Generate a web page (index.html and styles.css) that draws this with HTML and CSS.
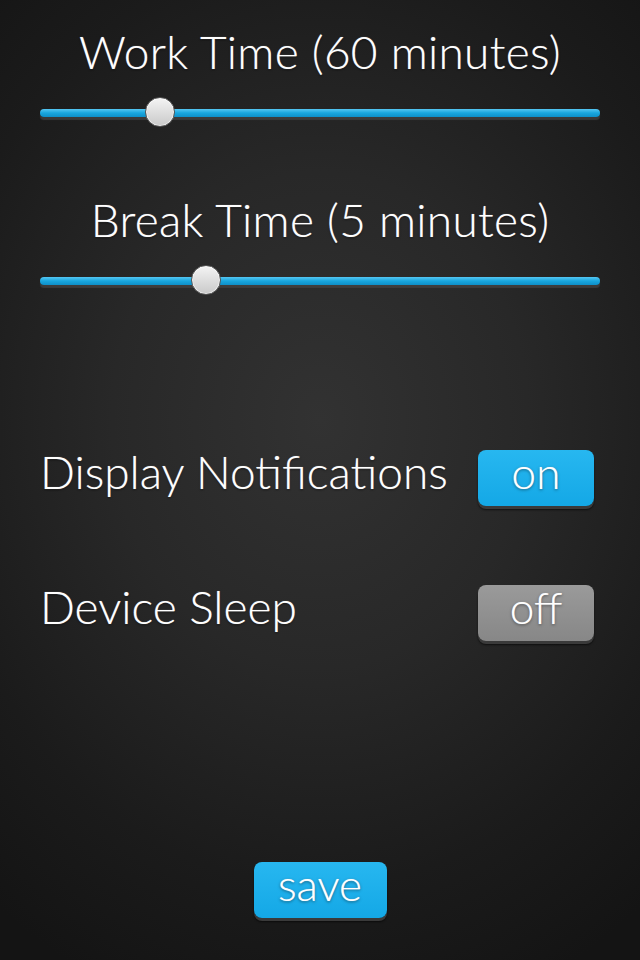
FILE: index.html
```html
<!DOCTYPE html>
<html>
<head>
<meta charset="utf-8">
<link rel="stylesheet" href="styles.css">
</head>
<body>
<div class="screen">
  <section class="slider-group">
    <h2 class="slider-title">Work Time (60 minutes)</h2>
    <div class="slider">
      <div class="track"></div>
      <div class="thumb" style="left: 105px"></div>
    </div>
  </section>
  <section class="slider-group second">
    <h2 class="slider-title">Break Time (5 minutes)</h2>
    <div class="slider">
      <div class="track"></div>
      <div class="thumb" style="left: 151px"></div>
    </div>
  </section>
  <div class="toggles">
    <div class="toggle-row">
      <span class="toggle-label">Display Notifications</span>
      <button class="btn btn-on">on</button>
    </div>
    <div class="toggle-row">
      <span class="toggle-label">Device Sleep</span>
      <button class="btn btn-off">off</button>
    </div>
  </div>
  <div class="footer">
    <button class="btn btn-save">save</button>
  </div>
</div>
</body>
</html>
```
FILE: styles.css
```css
html, body {
  margin: 0;
  padding: 0;
  width: 640px;
  height: 960px;
  overflow: hidden;
}
body {
  background: radial-gradient(ellipse 520px 620px at 320px 420px, #323232 0%, #282828 40%, #1b1b1b 75%, #141414 100%);
  font-family: Lato, "Open Sans", sans-serif;
  color: #fff;
}
.screen {
  height: 960px;
  display: flex;
  flex-direction: column;
  padding: 0 40px;
  box-sizing: border-box;
}
.slider-group {
  display: flex;
  flex-direction: column;
}
.slider-title {
  margin: 26px 0 0;
  font-weight: 300;
  font-size: 46px;
  line-height: 52px;
  text-align: center;
  letter-spacing: 0.3px;
  text-shadow: 0 0 1px rgba(255,255,255,0.5), 0 1px 2px rgba(0,0,0,0.6);
}
.second .slider-title {
  margin-top: 65px;
}
.slider {
  position: relative;
  height: 32px;
  margin-top: 19px;
}
.track {
  position: absolute;
  left: 0;
  right: 0;
  top: 12px;
  height: 8px;
  border-radius: 4px;
  background: linear-gradient(#55c6f2, #18a6de 50%, #0e8fc8);
  box-shadow: 0 3px 1px rgba(70,70,70,0.7);
}
.thumb {
  position: absolute;
  top: 0;
  width: 30px;
  height: 30px;
  border-radius: 50%;
  background: linear-gradient(#f4f4f4, #c9c9c9);
  border: 1px solid #555;
  box-sizing: border-box;
  box-shadow: 0 0 0 1px rgba(255,255,255,0.6) inset;
}
.toggles {
  margin-top: 153px;
  display: flex;
  flex-direction: column;
  gap: 79px;
}
.toggle-row {
  display: flex;
  justify-content: space-between;
  align-items: center;
  height: 56px;
}
.toggle-label {
  font-size: 46px;
  font-weight: 300;
  padding-bottom: 14px;
  text-shadow: 0 0 1px rgba(255,255,255,0.5), 0 1px 2px rgba(0,0,0,0.6);
}
.btn {
  font-family: Lato, "Open Sans", sans-serif;
  font-weight: 300;
  color: #fff;
  border: none;
  border-radius: 8px;
  height: 56px;
  padding: 0 0 12px;
  font-size: 44px;
  line-height: 44px;
  text-shadow: 0 0 1px rgba(255,255,255,0.6), 0 1px 3px rgba(0,0,0,0.5);
  box-shadow: 0 3px 0 #3a3a3a, 0 4px 2px rgba(0,0,0,0.6);
}
.btn-on, .btn-off {
  width: 116px;
  margin-right: 6px;
}
.btn-on, .btn-save {
  background: linear-gradient(#27b7f0, #14a8e6);
}
.btn-off {
  background: linear-gradient(#9a9a9a, #878787);
}
.footer {
  margin-top: auto;
  margin-bottom: 42px;
  display: flex;
  justify-content: center;
}
.btn-save {
  width: 133px;
}
```
